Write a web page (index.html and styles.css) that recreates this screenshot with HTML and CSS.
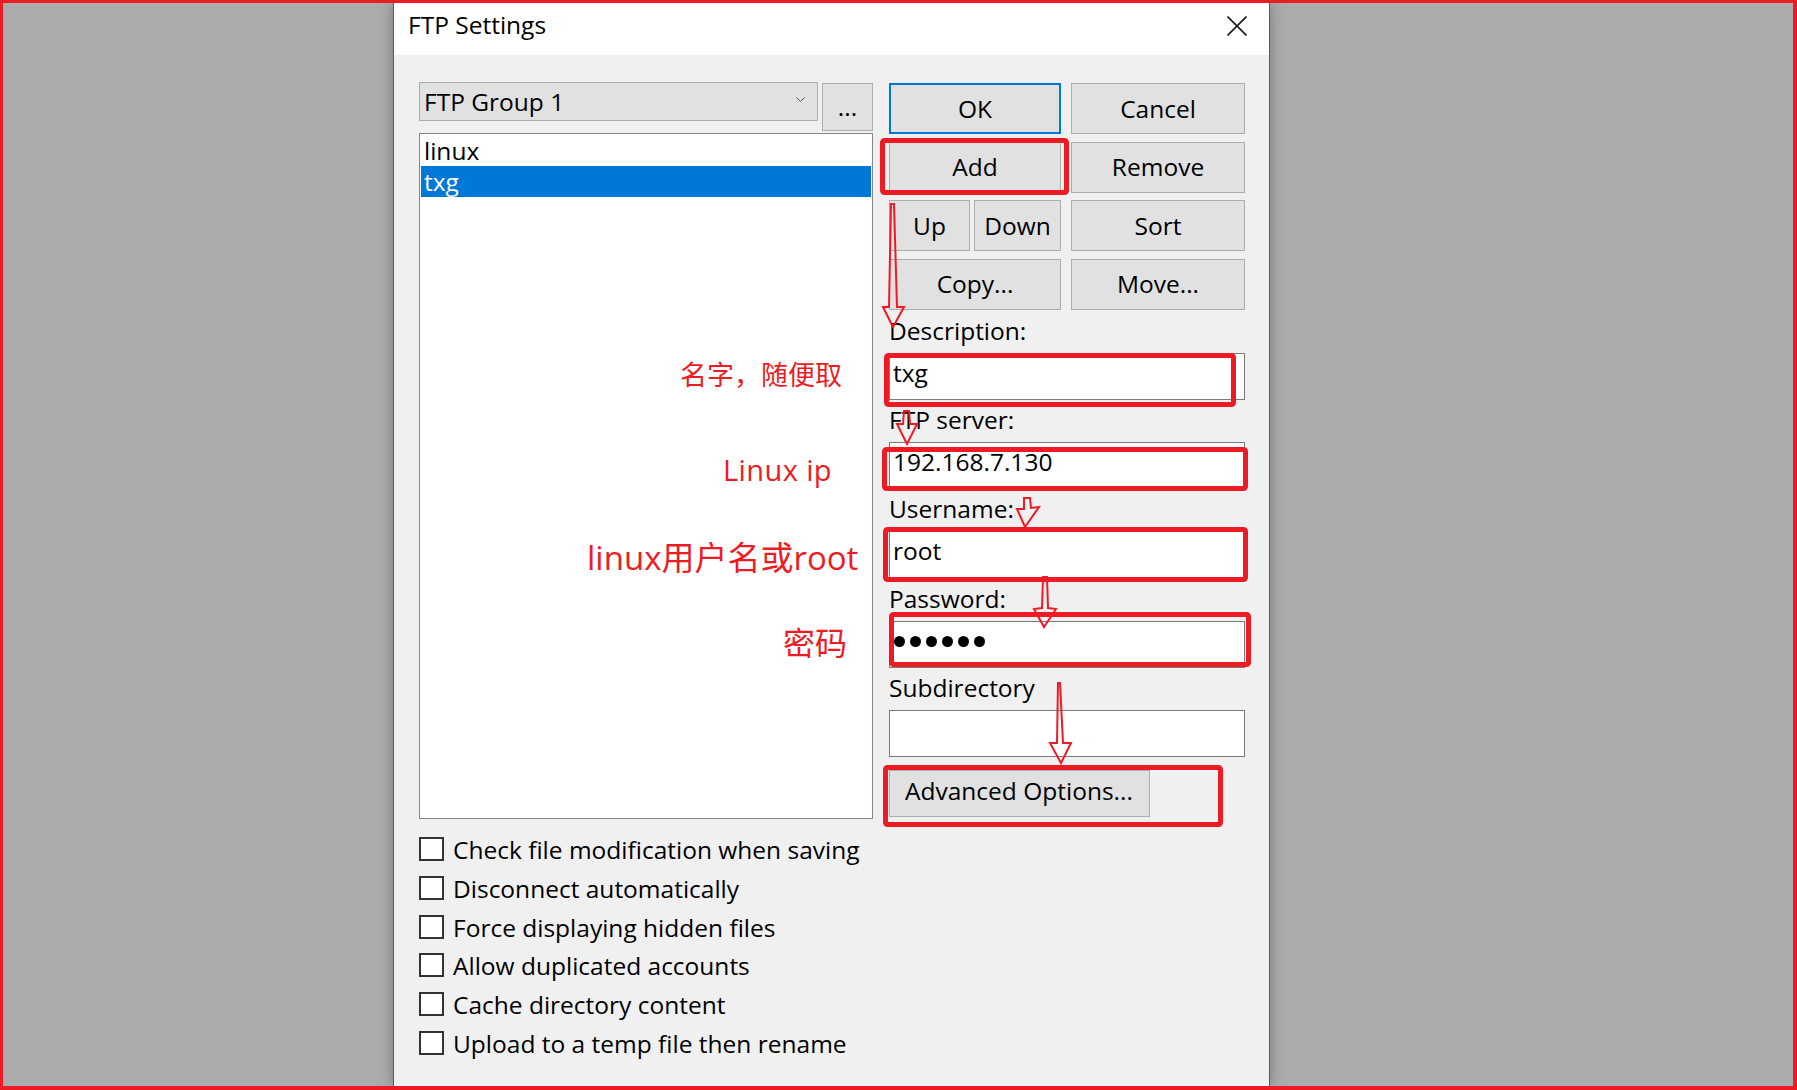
FILE: index.html
```html
<!DOCTYPE html>
<html>
<head>
<meta charset="utf-8">
<title>FTP Settings</title>
<link rel="stylesheet" href="styles.css">
</head>
<body>
<div class="screen">
  <div class="dialog">
    <div class="titlebar">
      <span class="title">FTP Settings</span>
      <svg class="close" viewBox="0 0 20 20"><path d="M0.5 0.5 L19.5 19.5 M19.5 0.5 L0.5 19.5" stroke="#1a1a1a" stroke-width="1.6" fill="none"/></svg>
    </div>
    <div class="dlg-body">
      <div class="main">
        <div class="left">
          <div class="group-row">
            <div class="combo"><span>FTP Group 1</span><svg class="chev" viewBox="0 0 9 5"><path d="M0.5 0.5 L4.5 4.5 L8.5 0.5" stroke="#555" stroke-width="1" fill="none"/></svg></div>
            <div class="btn dots-btn">...</div>
          </div>
          <div class="listbox">
            <div class="item">linux</div>
            <div class="item sel">txg</div>
          </div>
        </div>
        <div class="right">
          <div class="btn-grid">
            <div class="btn default">OK</div>
            <div class="btn">Cancel</div>
            <div class="btn">Add</div>
            <div class="btn">Remove</div>
            <div class="updown"><div class="btn up">Up</div><div class="btn down">Down</div></div>
            <div class="btn">Sort</div>
            <div class="btn">Copy...</div>
            <div class="btn">Move...</div>
          </div>
          <div class="fields">
            <div class="field"><div class="label">Description:</div><div class="edit">txg</div></div>
            <div class="field"><div class="label">FTP server:</div><div class="edit">192.168.7.130</div></div>
            <div class="field"><div class="label">Username:</div><div class="edit">root</div></div>
            <div class="field"><div class="label">Password:</div><div class="edit"><div class="pw-dots"><i></i><i></i><i></i><i></i><i></i><i></i></div></div></div>
            <div class="field"><div class="label">Subdirectory</div><div class="edit"></div></div>
          </div>
          <div class="btn adv">Advanced Options...</div>
        </div>
      </div>
      <div class="checks">
        <div class="check"><span class="box"></span><span>Check file modification when saving</span></div>
        <div class="check"><span class="box"></span><span>Disconnect automatically</span></div>
        <div class="check"><span class="box"></span><span>Force displaying hidden files</span></div>
        <div class="check"><span class="box"></span><span>Allow duplicated accounts</span></div>
        <div class="check"><span class="box"></span><span>Cache directory content</span></div>
        <div class="check"><span class="box"></span><span>Upload to a temp file then rename</span></div>
      </div>
    </div>
  </div>

  <div class="annot">
    <svg class="marks" width="1797" height="1090" viewBox="0 0 1797 1090">
      <g fill="none" stroke="#ed1c24" stroke-width="5">
        <rect x="882.5" y="140.5" width="184" height="52" rx="2"/>
        <rect x="886.5" y="355.5" width="347" height="49" rx="2"/>
        <rect x="884.5" y="449.5" width="361" height="39" rx="2"/>
        <rect x="885.5" y="529.5" width="360" height="50" rx="2"/>
        <rect x="891.5" y="614.5" width="357" height="50" rx="2"/>
        <rect x="885.5" y="767.5" width="335" height="57" rx="2"/>
      </g>
      <g fill="none" stroke="#ed1c24" stroke-width="2" stroke-linejoin="miter">
        <polygon points="891,204 894,204 897,307 904,307 893,327 883,307 889,307"/>
        <polygon points="904,411 909,411 910,424 917,424 907,444 897,424 903,424"/>
        <polygon points="1024,498 1030,498 1031,508 1039,507 1025,527 1017,509 1024,509"/>
        <polygon points="1043,577 1047,577 1048,608 1056,609 1044,627 1034,609 1042,608"/>
        <polygon points="1058,683 1060,683 1063,743 1071,743 1061,763 1050,743 1057,743"/>
      </g>
    </svg>
    <div class="note n1">名字，随便取</div>
    <div class="note n2">Linux ip</div>
    <div class="note n3">linux用户名或root</div>
    <div class="note n4">密码</div>
  </div>
</div>
</body>
</html>
```

FILE: styles.css
```css
body {
  margin: 0;
}

.screen {
  position: relative;
  width: 1797px;
  height: 1090px;
  box-sizing: border-box;
  border: 3px solid #ed1c24;
  border-right-width: 4px;
  border-bottom-width: 4px;
  background: #ababab;
  overflow: hidden;
  font-family: "Open Sans", "Noto Sans", sans-serif;
  font-size: 24.5px;
  color: #000;
}

.dialog {
  margin-left: 390px;
  width: 877px;
  height: 100%;
  box-sizing: border-box;
  border-left: 1px solid #5a5a5a;
  border-right: 1px solid #5a5a5a;
  background: #f0f0f0;
  box-shadow: 0 0 12px rgba(0, 0, 0, 0.3);
  display: flex;
  flex-direction: column;
}

.titlebar {
  background: #fff;
  height: 52px;
  flex: none;
  box-sizing: border-box;
  display: flex;
  align-items: flex-start;
  justify-content: space-between;
  padding: 6px 22px 0 14px;
}

.title {
  line-height: 32px;
}

.close {
  width: 20px;
  height: 20px;
  margin-top: 7px;
}

.dlg-body {
  padding: 27px 24px 0 25px;
}

.main {
  display: flex;
  gap: 16px;
  align-items: flex-start;
}

.left {
  width: 454px;
  flex: none;
}

.group-row {
  display: flex;
  gap: 4px;
  align-items: flex-start;
}

.combo {
  width: 399px;
  height: 39px;
  box-sizing: border-box;
  border: 1px solid #adadad;
  background: #e1e1e1;
  display: flex;
  align-items: center;
  justify-content: space-between;
  padding: 0 12px 0 4px;
  line-height: 37px;
}

.chev {
  width: 9px;
  height: 5px;
  margin-top: -4px;
}

.btn {
  box-sizing: border-box;
  border: 1px solid #adadad;
  background: #e1e1e1;
  display: flex;
  align-items: center;
  justify-content: center;
  line-height: 32px;
  white-space: nowrap;
}

.dots-btn {
  width: 51px;
  height: 48px;
  margin-top: 1px;
}

.listbox {
  margin-top: 2px;
  height: 686px;
  box-sizing: border-box;
  border: 1px solid #828790;
  background: #fff;
  padding: 1px;
}

.item {
  height: 31px;
  line-height: 31px;
  padding-left: 3px;
}

.item.sel {
  background: #0078d7;
  color: #fff;
}

.right {
  width: 356px;
  flex: none;
  margin-top: 1px;
}

.btn-grid {
  display: grid;
  grid-template-columns: 172px 1fr;
  grid-auto-rows: 51px;
  column-gap: 10px;
  row-gap: 7.67px;
}

.btn.default {
  border: 2px solid #0078d7;
}

.updown {
  display: flex;
  gap: 4px;
}

.updown .up {
  width: 81px;
}

.updown .down {
  flex: 1;
}

.fields {
  margin-top: 5px;
  display: flex;
  flex-direction: column;
  gap: 4.25px;
}

.field {
  display: flex;
  flex-direction: column;
  gap: 6px;
}

.label {
  line-height: 32px;
}

.edit {
  height: 47px;
  box-sizing: border-box;
  border: 1px solid #7a7a7a;
  background: #fff;
  padding: 3px 0 0 3px;
  line-height: 32px;
}

.pw-dots {
  display: flex;
  gap: 5px;
  margin-top: 11px;
  padding-left: 1px;
}

.pw-dots i {
  width: 11px;
  height: 11px;
  border-radius: 50%;
  background: #000;
}

.adv {
  margin-top: 13px;
  width: 261px;
  height: 47px;
  justify-content: flex-start;
  padding: 0 0 5px 15px;
}

.checks {
  margin-top: 12px;
}

.check {
  display: flex;
  align-items: flex-start;
  gap: 9px;
  height: 38.8px;
  line-height: 38.8px;
}

.box {
  width: 25px;
  height: 24px;
  box-sizing: border-box;
  border: 2px solid #333;
  background: #fff;
  margin-top: 6px;
  flex: none;
}

.annot {
  position: absolute;
  left: -3px;
  top: -3px;
  width: 1797px;
  height: 1090px;
  pointer-events: none;
}

.marks {
  position: absolute;
  left: 0;
  top: 0;
}

.note {
  position: absolute;
  color: #ed1c24;
  line-height: 1;
  white-space: nowrap;
  font-family: "Open Sans", "Noto Sans CJK SC", sans-serif;
}

.n1 {
  left: 680px;
  top: 360px;
  font-size: 27px;
  font-family: "Noto Sans CJK SC", sans-serif;
}

.n2 {
  left: 723px;
  top: 455px;
  font-size: 29px;
  letter-spacing: 0.4px;
}

.n3 {
  left: 587px;
  top: 541px;
  font-size: 33px;
}

.n4 {
  left: 783px;
  top: 625px;
  font-size: 32px;
  font-family: "Noto Sans CJK SC", sans-serif;
}
```
